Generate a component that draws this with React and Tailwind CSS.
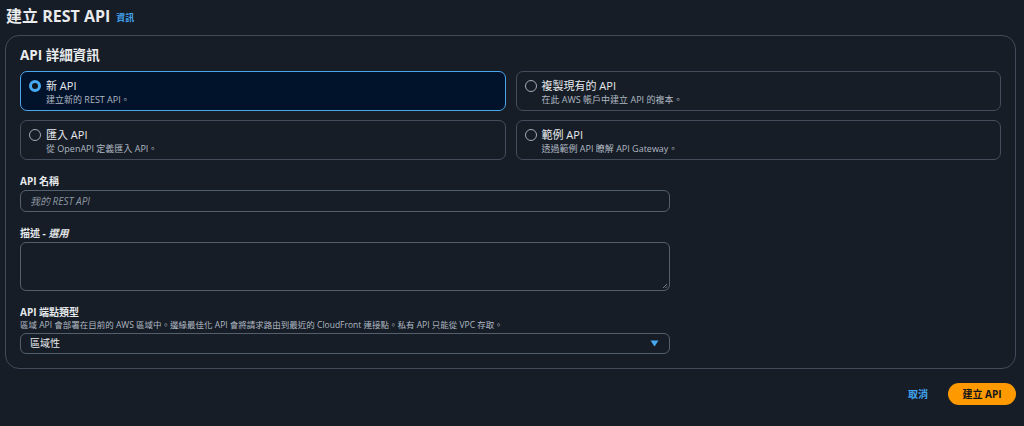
import React from "react";

const font = { fontFamily: '"Open Sans", "Noto Sans CJK TC", sans-serif' };

function Radio({ checked }) {
  return checked ? (
    <span className="mt-[1px] box-border block h-[12px] w-[12px] shrink-0 rounded-full border-[3.5px] border-[#47a9f0] bg-[#0f141a]" />
  ) : (
    <span className="mt-[1px] box-border block h-[12px] w-[12px] shrink-0 rounded-full border border-[#a3acb7] bg-transparent" />
  );
}

function Tile({ checked, title, desc }) {
  return (
    <div
      className={
        "box-border flex h-[40px] items-start gap-[5px] rounded-[7px] pl-[8px] pt-[7px] " +
        (checked
          ? "border-[1.5px] border-[#4aa7ee] bg-[#01122b]"
          : "border border-[#434d5b] bg-transparent")
      }
    >
      <Radio checked={checked} />
      <div className="flex flex-col">
        <span className="text-[11px] leading-[14px] text-[#e6e9ec]">{title}</span>
        <span className="mt-[1px] text-[9px] leading-[12px] text-[#b0b8c2]">{desc}</span>
      </div>
    </div>
  );
}

export default function App() {
  return (
    <div style={font} className="box-border h-[426px] w-[1024px] overflow-hidden bg-[#161d26] pl-[5px] pr-[8px] pt-[3px]">
      <div className="flex items-end gap-[6px] pl-[1px]">
        <h1 className="text-[16px] font-bold leading-[27px] text-[#e9ebed]">建立 REST API</h1>
        <span className="mb-[6px] text-[9px] font-bold leading-[12px] text-[#42a5f0]">資訊</span>
      </div>
      <div className="mt-[5px] box-border rounded-[14px] border border-[#414b59] bg-[#161d26] px-[14px] pb-[14px] pt-[9px]">
        <h2 className="text-[13.5px] font-bold leading-[20px] text-[#e9ebed]">API 詳細資訊</h2>
        <div className="mt-[6px] grid grid-cols-2 gap-x-[10px] gap-y-[9px]">
          <Tile checked title="新 API" desc="建立新的 REST API。" />
          <Tile title="複製現有的 API" desc="在此 AWS 帳戶中建立 API 的複本。" />
          <Tile title="匯入 API" desc="從 OpenAPI 定義匯入 API。" />
          <Tile title="範例 API" desc="透過範例 API 瞭解 API Gateway。" />
        </div>

        <div className="mt-[14px] w-[650px]">
          <label className="block text-[10px] font-bold leading-[14px] text-[#e6e9ec]">API 名稱</label>
          <div className="mt-[2px] box-border flex h-[22px] items-center rounded-[6px] border border-[#545f6d] px-[9px]">
            <span className="text-[10px] italic text-[#8d96a2]">我的 REST API</span>
          </div>

          <label className="mt-[14px] block text-[10px] font-bold leading-[14px] text-[#e6e9ec]">
            描述 - <span className="italic">選用</span>
          </label>
          <div className="relative mt-[2px] box-border h-[49px] rounded-[6px] border border-[#545f6d]">
            <svg className="absolute bottom-[1px] right-[1px]" width="6" height="6" viewBox="0 0 6 6">
              <path d="M5 1L1 5M5 3.5L3.5 5" stroke="#8d96a2" strokeWidth="0.8" />
            </svg>
          </div>

          <label className="mt-[14px] block text-[10px] font-bold leading-[14px] text-[#e6e9ec]">API 端點類型</label>
          <p className="text-[8.5px] leading-[12px] text-[#b0b8c2]">
            區域 API 會部署在目前的 AWS 區域中。邊緣最佳化 API 會將請求路由到最近的 CloudFront 連接點。私有 API 只能從 VPC 存取。
          </p>
          <div className="mt-[2px] box-border flex h-[21px] items-center justify-between rounded-[6px] border border-[#545f6d] pl-[9px] pr-[10px]">
            <span className="text-[10px] text-[#e6e9ec]">區域性</span>
            <svg width="9" height="7" viewBox="0 0 9 7">
              <path d="M0.5 0.5H8.5L4.5 6.5Z" fill="#47a9f0" />
            </svg>
          </div>
        </div>
      </div>

      <div className="mt-[14px] flex items-center justify-end gap-[20px]">
        <span className="text-[10px] font-bold text-[#42a5f0]">取消</span>
        <button className="h-[22px] w-[68px] rounded-full bg-[#ff9900] text-[10px] font-bold text-[#0f141a]">
          建立 API
        </button>
      </div>
    </div>
  );
}
